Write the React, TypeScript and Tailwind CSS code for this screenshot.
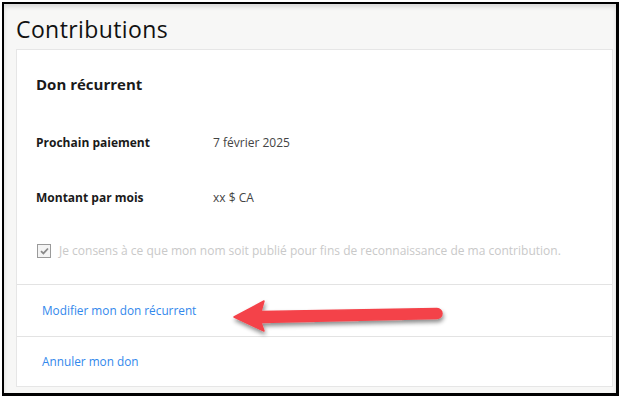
import React from 'react';

const font = { fontFamily: '"Open Sans", Lato, sans-serif' };

const Arrow: React.FC = () => (
  <svg className="absolute left-0 top-0 pointer-events-none" width={621} height={397} viewBox="0 0 621 397">
    <defs>
      <filter id="arrowShadow" x="-10%" y="-50%" width="120%" height="200%">
        <feDropShadow dx="1" dy="3" stdDeviation="2" floodColor="#000" floodOpacity="0.45" />
      </filter>
    </defs>
    <path
      d="M234 317 L264 301 L261 311.5 L437 308.5 A5 5 0 0 1 437 318.5 L261 322.5 L264 331 Z"
      fill="#f4434a"
      stroke="#f4434a"
      strokeWidth={1.5}
      strokeLinejoin="round"
      filter="url(#arrowShadow)"
    />
  </svg>
);

export default function App() {
  return (
    <div className="relative w-[621px] h-[397px] bg-white pl-[2px] pt-[2px]" style={font}>
      <div className="w-[617px] h-[394px] border-l-2 border-t-2 border-r-[3px] border-b-[3px] border-black bg-[#f7f7f6] shadow-[inset_0_3px_4px_rgba(0,0,0,0.12)] flex flex-col">
        {/* Header */}
        <div className="h-[45px] pl-[12px] pt-[6px] flex items-center shrink-0">
          <h1 className="text-[23px] leading-none text-[#111] tracking-[0.4px]">Contributions</h1>
        </div>

        {/* Card */}
        <div className="ml-[12px] mr-[3px] bg-white border border-[#e6e6e6] flex-1 mb-[6px] flex flex-col">
          <div className="pt-[24px] pl-[19px] pb-[23px]">
            <h2 className="h-[20px] leading-[20px] text-[15px] font-bold text-[#1a1a1a]">Don récurrent</h2>

            <div className="mt-[39px] h-[20px] flex items-center">
              <span className="w-[177px] text-[12px] font-bold text-[#1a1a1a]">Prochain paiement</span>
              <span className="text-[12px] text-[#444]">7 février 2025</span>
            </div>

            <div className="mt-[35px] h-[20px] flex items-center">
              <span className="w-[177px] text-[12px] font-bold text-[#1a1a1a]">Montant par mois</span>
              <span className="text-[12px] text-[#444]">xx $ CA</span>
            </div>

            <div className="mt-[33px] h-[20px] flex items-center">
              <span className="ml-[1px] w-[14px] h-[14px] border border-[#9a9a9a] bg-[#f4f4f4] flex items-center justify-center">
                <svg width="9" height="8" viewBox="0 0 9 8">
                  <path d="M1 4.2 L3.4 6.4 L8 1.5" fill="none" stroke="#8a8a8a" strokeWidth="1.8" />
                </svg>
              </span>
              <span className="ml-[8px] text-[12px] text-[#c9c9c9]">
                Je consens à ce que mon nom soit publié pour fins de reconnaissance de ma contribution.
              </span>
            </div>
          </div>

          <div className="border-t border-[#e3e3e3] h-[52px] pl-[25px] flex items-center">
            <a className="text-[11.8px] text-[#3288ec]">Modifier mon don récurrent</a>
          </div>
          <div className="border-t border-[#e3e3e3] flex-1 pl-[25px] flex items-center">
            <a className="text-[11.8px] text-[#3288ec]">Annuler mon don</a>
          </div>
        </div>
      </div>
      <Arrow />
    </div>
  );
}
